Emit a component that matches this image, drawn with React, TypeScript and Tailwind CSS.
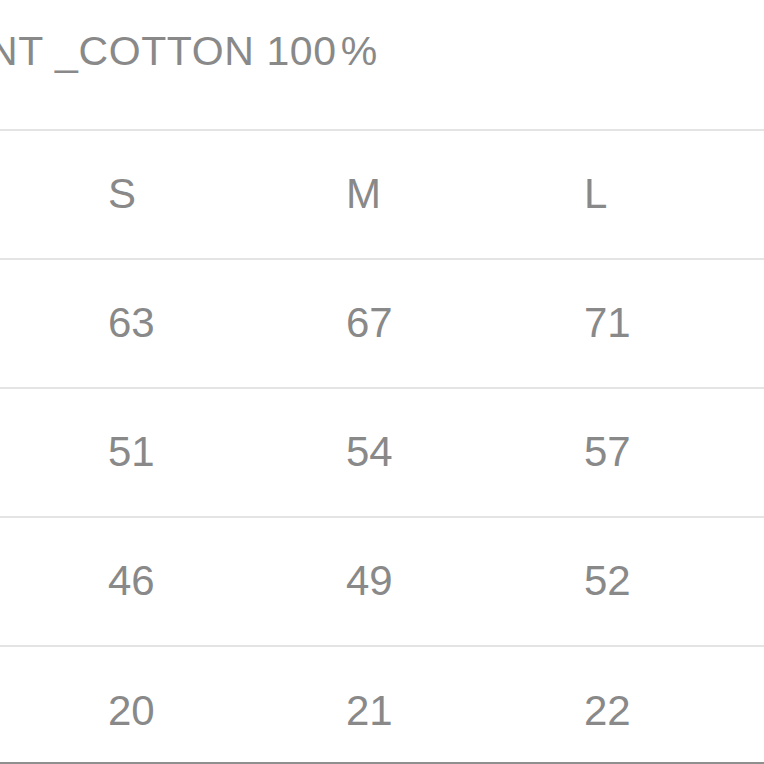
import React from 'react';

const sizes = ['S', 'M', 'L'];

const rows: string[][] = [
  ['63', '67', '71'],
  ['51', '54', '57'],
  ['46', '49', '52'],
  ['20', '21', '22'],
];

const Cell: React.FC<{ value: string }> = ({ value }) => (
  <div className="w-[238px] shrink-0">{value}</div>
);

const App: React.FC = () => {
  return (
    <div
      className="w-[764px] h-[764px] overflow-hidden bg-white text-[#898989] flex flex-col"
      style={{ fontFamily: '"Liberation Sans", Arial, sans-serif' }}
    >
      {/* material line, clipped at the left edge like the photo */}
      <div className="h-[129px] shrink-0 pt-[27px] overflow-hidden">
        <div className="-ml-[12px] text-[41px] leading-[48px] tracking-[0.6px] whitespace-nowrap">
          NT _COTTON 100<span className="ml-[4px]">%</span>
        </div>
      </div>

      <div className="h-[129px] shrink-0 border-t-2 border-[#e4e4e4] flex items-center pl-[108px] text-[42px] pb-[2px]">
        {sizes.map((s) => (
          <Cell key={s} value={s} />
        ))}
      </div>

      {rows.map((row, i) => (
        <div
          key={i}
          className={
            i === rows.length - 1
              ? 'flex-1 border-t-2 border-b-2 border-t-[#e4e4e4] border-b-[#8f8f8f] flex items-center pl-[108px] text-[42px] pt-[12px]'
              : 'h-[129px] shrink-0 border-t-2 border-[#e4e4e4] flex items-center pl-[108px] text-[42px] pb-[2px]'
          }
        >
          {row.map((v, j) => (
            <Cell key={j} value={v} />
          ))}
        </div>
      ))}
    </div>
  );
};

export default App;
